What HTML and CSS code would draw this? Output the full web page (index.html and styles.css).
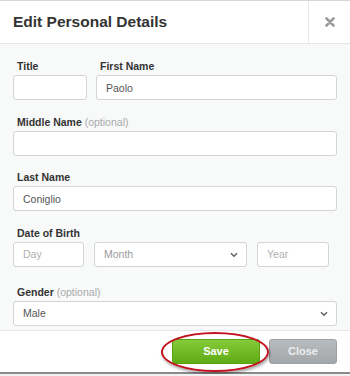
FILE: index.html
```html
<!DOCTYPE html>
<html lang="en">
<head>
    <meta charset="UTF-8">
    <meta name="viewport" content="width=device-width, initial-scale=1.0">
    <title>Edit Personal Details</title>
    <link rel="stylesheet" href="styles.css">
</head>
<body>

<div class="modal">
    <div class="modal-header">
        <h1 class="modal-title">Edit Personal Details</h1>
        <button class="modal-close" aria-label="Close">
            <svg width="10" height="10" viewBox="0 0 10 10"><path d="M1.5 1.5 L8.5 8.5 M8.5 1.5 L1.5 8.5" stroke="#9a9a9a" stroke-width="2.6" stroke-linecap="round"/></svg>
        </button>
    </div>

    <div class="modal-body">
        <div class="row">
            <div class="field title-field">
                <label>Title</label>
                <input type="text" value="">
            </div>
            <div class="field grow">
                <label>First Name</label>
                <input type="text" value="Paolo">
            </div>
        </div>

        <div class="field">
            <label>Middle Name <span class="optional">(optional)</span></label>
            <input type="text" value="">
        </div>

        <div class="field">
            <label>Last Name</label>
            <input type="text" value="Coniglio">
        </div>

        <div class="field dob">
            <label>Date of Birth</label>
            <div class="row">
                <input class="day" type="text" placeholder="Day">
                <div class="select-wrap month">
                    <select><option>Month</option></select>
                    <svg class="chevron" width="8" height="6" viewBox="0 0 8 6"><path d="M1 1.2 L4 4.2 L7 1.2" fill="none" stroke="#666" stroke-width="1.6"/></svg>
                </div>
                <input class="year" type="text" placeholder="Year">
            </div>
        </div>

        <div class="field last">
            <label>Gender <span class="optional">(optional)</span></label>
            <div class="select-wrap">
                <select class="filled"><option>Male</option></select>
                <svg class="chevron" width="8" height="6" viewBox="0 0 8 6"><path d="M1 1.2 L4 4.2 L7 1.2" fill="none" stroke="#666" stroke-width="1.6"/></svg>
            </div>
        </div>
    </div>

    <div class="modal-footer">
        <div class="save-wrap">
            <button class="btn btn-save">Save</button>
            <span class="highlight"></span>
        </div>
        <button class="btn btn-close">Close</button>
    </div>
</div>

</body>
</html>
```

FILE: styles.css
```css
body {
    margin: 0;
    font-family: "Liberation Sans", Arial, sans-serif;
    background-color: #f2f2f2;
    color: #333;
}
.modal {
    width: 350px;
    background-color: #fff;
    border-top: 1px solid #d6d6d6;
    border-bottom: 2px solid #8a8a8a;
}
.modal-header {
    display: flex;
    height: 42px;
    border-bottom: 1px solid #e4e6e6;
}
.modal-title {
    flex: 1;
    margin: 0;
    padding-left: 13px;
    font-size: 15.5px;
    font-weight: bold;
    line-height: 42px;
    color: #333;
}
.modal-close {
    width: 42px;
    border: none;
    border-left: 1px solid #e8e8e8;
    background: #fff;
    padding: 0 0 0 1px;
    display: flex;
    align-items: center;
    justify-content: center;
}
.modal-body {
    background-color: #f8f9f9;
    padding: 15px 13px 4px 13px;
}
.row {
    display: flex;
    gap: 9px;
}
.field {
    display: flex;
    flex-direction: column;
    margin-bottom: 14.5px;
}
.row .field {
    margin-bottom: 0;
}
.row + .field {
    margin-top: 14.5px;
}
.field.dob {
    margin-bottom: 18px;
}
.field.last {
    margin-bottom: 0;
}
.title-field {
    width: 74px;
}
.grow {
    flex: 1;
}
label {
    font-size: 10.5px;
    font-weight: bold;
    line-height: 14px;
    height: 14px;
    margin: 0 0 2px 4px;
    color: #333;
}
.optional {
    font-weight: normal;
    color: #aaa;
}
input, select {
    box-sizing: border-box;
    height: 25px;
    width: 100%;
    border: 1px solid #d4d4d4;
    border-radius: 3px;
    background: #fff;
    font-family: "Liberation Sans", Arial, sans-serif;
    font-size: 10.5px;
    color: #555;
    padding: 0 9px;
    margin: 0;
    outline: none;
}
input::placeholder {
    color: #b0b0b0;
}
select {
    appearance: none;
    -webkit-appearance: none;
    color: #999;
}
select.filled {
    color: #555;
}
.dob .row {
    gap: 10px;
}
.dob .day {
    width: 71px;
}
.dob .year {
    width: 72px;
}
.select-wrap {
    position: relative;
    flex: 1;
}
.select-wrap.month {
    flex: none;
    width: 153px;
}
.chevron {
    position: absolute;
    right: 9px;
    top: 10px;
}
.modal-footer {
    display: flex;
    justify-content: flex-end;
    gap: 9px;
    padding: 8px 13px 8px 0;
    border-top: 1px solid #e6e6e6;
    background-color: #fff;
    margin-top: 0;
}
.save-wrap {
    position: relative;
}
.btn {
    box-sizing: border-box;
    height: 25px;
    border-radius: 3px;
    font-family: "Liberation Sans", Arial, sans-serif;
    font-size: 11px;
    font-weight: bold;
    cursor: pointer;
}
.btn-save {
    width: 88px;
    color: #fff;
    background: linear-gradient(#86cb3a, #5eab14);
    border: 1px solid #58a112;
}
.btn-close {
    width: 68px;
    color: #eceef0;
    background: linear-gradient(#b9bcbf, #a4a7aa);
    border: 1px solid #9da0a3;
}
.highlight {
    position: absolute;
    left: -11px;
    top: -7px;
    width: 104px;
    height: 36px;
    border: 2px solid #c3131f;
    border-radius: 50%;
    box-shadow: 1px 2px 3px rgba(0, 0, 0, 0.35);
    pointer-events: none;
}
```
